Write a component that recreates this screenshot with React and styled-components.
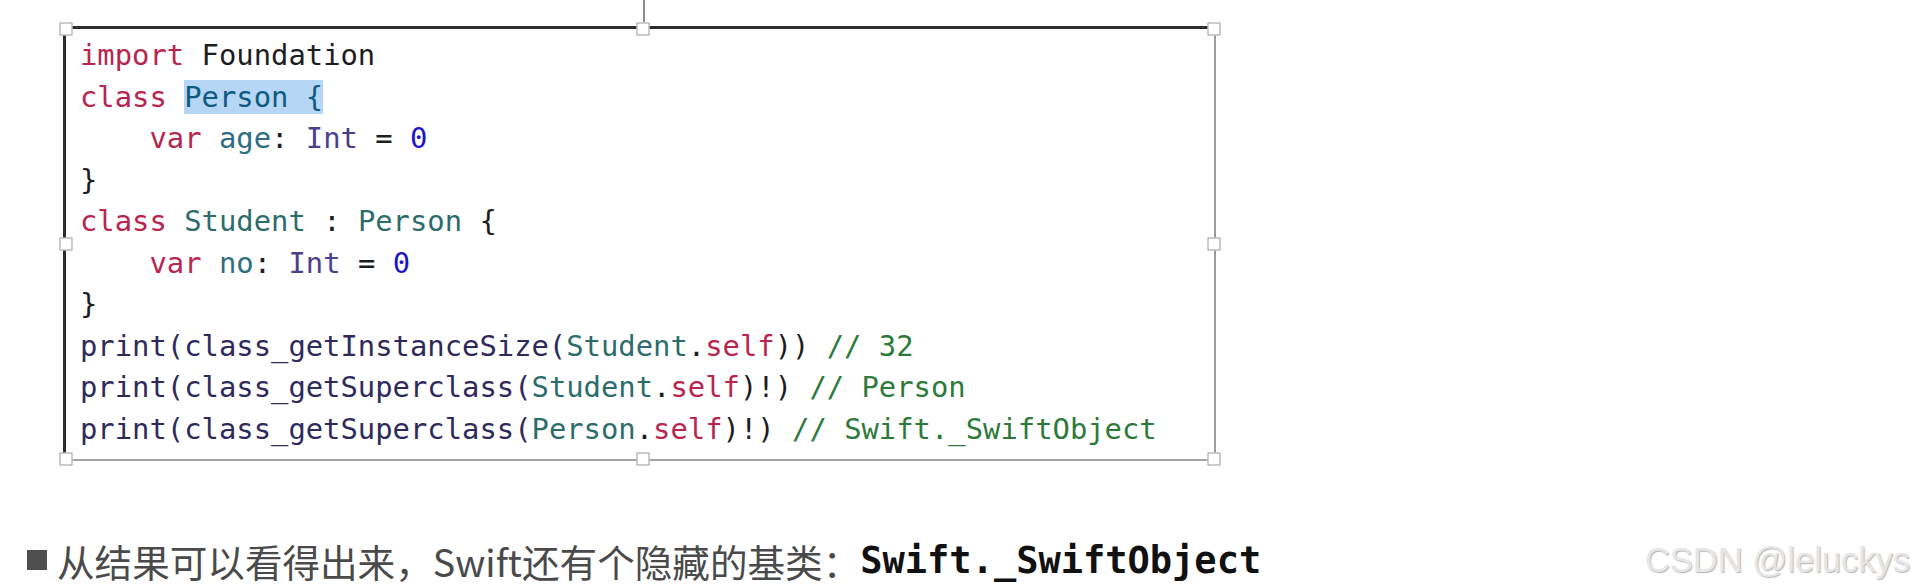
import React from 'react';
import styled, { createGlobalStyle } from 'styled-components';

const GlobalStyle = createGlobalStyle`
  html, body {
    margin: 0;
    padding: 0;
    background: #ffffff;
  }
  body {
    width: 1916px;
    height: 586px;
    overflow: hidden;
  }
`;

const colors = {
  kw: '#b8264f',
  plain: '#1d1d1f',
  decl: '#0f5a80',
  prop: '#2f6e82',
  type: '#4b3f8c',
  num: '#1c16c8',
  user: '#2d6c6c',
  fn: '#2e2a5c',
  comment: '#2d7a3a',
};

const Page = styled.div`
  position: relative;
  width: 1916px;
  height: 586px;
  font-family: 'DejaVu Sans Mono', monospace;
`;

const Stage = styled.div`
  padding: 26px 0 0 63px;
`;

const Frame = styled.div`
  position: relative;
  box-sizing: border-box;
  width: 1153px;
  height: 435px;
  border-top: 3px solid #2e2e2e;
  border-left: 3px solid #2e2e2e;
  border-right: 2px solid #9c9c9c;
  border-bottom: 2px solid #a4a4a4;
  padding: 6px 0 0 14px;
`;

const Handle = styled.span`
  position: absolute;
  width: 13px;
  height: 13px;
  box-sizing: border-box;
  background: #ffffff;
  border: 1px solid #9a9a9a;
  left: ${(p) => p.$x};
  top: ${(p) => p.$y};
  transform: translate(-50%, -50%);
`;

const RotateLine = styled.span`
  position: absolute;
  left: 577px;
  top: -29px;
  width: 2px;
  height: 22px;
  background: #8c8c8c;
`;

const Code = styled.pre`
  margin: 0;
  font-family: 'DejaVu Sans Mono', 'Liberation Mono', monospace;
  font-size: 28.85px;
  line-height: 41.55px;
  color: ${colors.plain};
  white-space: pre;
`;

const Line = styled.div`
  height: 41.55px;
`;

const Tok = styled.span`
  color: ${(p) => colors[p.$k] || colors.plain};
  background: ${(p) => (p.$hl ? '#b6d6f5' : 'transparent')};
`;

const Caption = styled.div`
  display: flex;
  align-items: center;
  margin-top: 74px;
  padding-left: 27px;
  height: 50px;
`;

const Bullet = styled.span`
  width: 20px;
  height: 20px;
  background: #4f4f4f;
  margin-right: 10px;
  flex: none;
`;

const CaptionText = styled.span`
  font-family: 'Noto Sans CJK SC', 'Noto Sans', sans-serif;
  font-size: 37.6px;
  color: #4a4a4a;
`;

const CaptionCode = styled.span`
  font-family: 'DejaVu Sans Mono', monospace;
  font-weight: bold;
  font-size: 37px;
  color: #111111;
`;

const Watermark = styled.span`
  margin-left: auto;
  margin-right: 6px;
  font-family: 'Liberation Sans', Arial, sans-serif;
  font-size: 34.5px;
  color: #e6e6e6;
  text-shadow: 1px 1px 1px #b4b4b4;
`;

const t = (k, s, hl) => ({ k, s, hl });

const lines = [
  [t('kw', 'import'), t('plain', ' Foundation')],
  [t('kw', 'class'), t('plain', ' '), t('decl', 'Person {', true)],
  [t('plain', '    '), t('kw', 'var'), t('plain', ' '), t('prop', 'age'), t('plain', ': '), t('type', 'Int'), t('plain', ' = '), t('num', '0')],
  [t('plain', '}')],
  [t('kw', 'class'), t('plain', ' '), t('user', 'Student'), t('plain', ' : '), t('user', 'Person'), t('plain', ' {')],
  [t('plain', '    '), t('kw', 'var'), t('plain', ' '), t('prop', 'no'), t('plain', ': '), t('type', 'Int'), t('plain', ' = '), t('num', '0')],
  [t('plain', '}')],
  [t('fn', 'print(class_getInstanceSize('), t('user', 'Student'), t('plain', '.'), t('kw', 'self'), t('plain', ')) '), t('comment', '// 32')],
  [t('fn', 'print(class_getSuperclass('), t('user', 'Student'), t('plain', '.'), t('kw', 'self'), t('plain', ')!) '), t('comment', '// Person')],
  [t('fn', 'print(class_getSuperclass('), t('user', 'Person'), t('plain', '.'), t('kw', 'self'), t('plain', ')!) '), t('comment', '// Swift._SwiftObject')],
];

const handles = [
  ['0px', '0px'],
  ['577px', '0px'],
  ['100%', '0px'],
  ['0px', '50%'],
  ['100%', '50%'],
  ['0px', '100%'],
  ['577px', '100%'],
  ['100%', '100%'],
];

export default function App() {
  return (
    <Page>
      <GlobalStyle />
      <Stage>
        <Frame>
          <RotateLine />
          <Code>
            {lines.map((line, i) => (
              <Line key={i}>
                {line.map((tok, j) => (
                  <Tok key={j} $k={tok.k} $hl={tok.hl}>
                    {tok.s}
                  </Tok>
                ))}
              </Line>
            ))}
          </Code>
          {handles.map(([x, y], i) => (
            <Handle key={i} $x={x} $y={y} />
          ))}
        </Frame>
      </Stage>
      <Caption>
        <Bullet />
        <CaptionText>从结果可以看得出来，Swift还有个隐藏的基类：</CaptionText>
        <CaptionCode>Swift._SwiftObject</CaptionCode>
        <Watermark>CSDN @leluckys</Watermark>
      </Caption>
    </Page>
  );
}
